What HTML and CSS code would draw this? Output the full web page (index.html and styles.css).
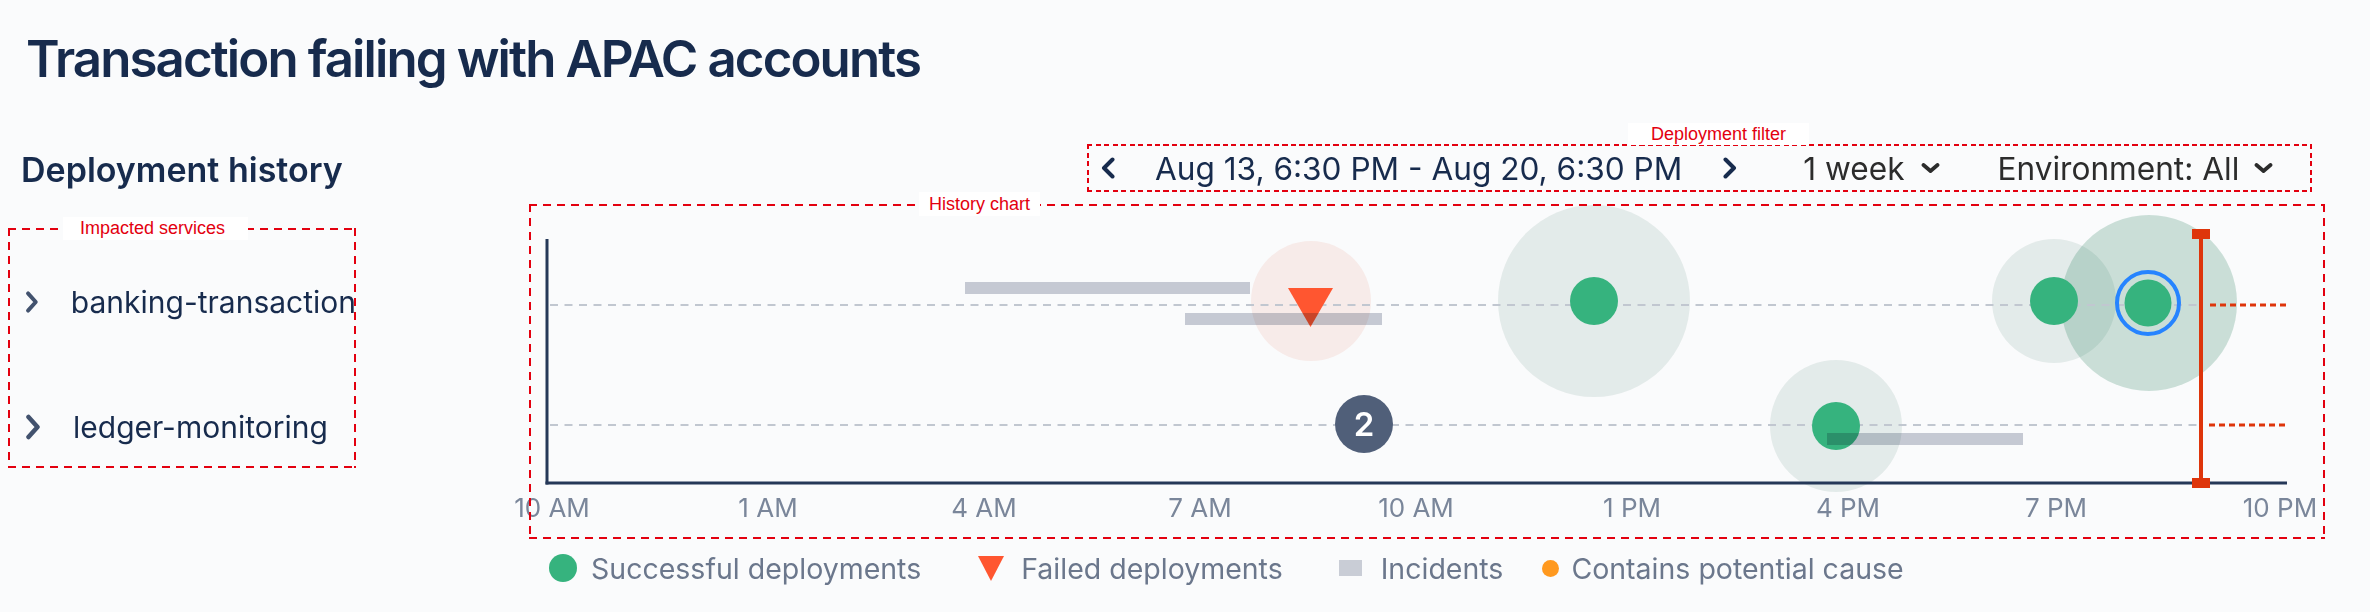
FILE: index.html
```html
<!DOCTYPE html>
<html lang="en">
<head>
<meta charset="utf-8">
<title>Deployment history</title>
<link rel="stylesheet" href="styles.css">
</head>
<body>
<h1 class="title">Transaction failing with APAC accounts</h1>
<main class="layout">
  <h2 class="section-title">Deployment history</h2>

  <div class="filter annot annot--fine">
    <span class="annot-label annot-label--filter">Deployment filter</span>
    <button class="ctl nav-btn nav-btn--prev" aria-label="Previous">
      <svg width="16" height="22" viewBox="0 0 16 22"><polyline points="12.5,2.5 4,11 12.5,19.5"/></svg>
    </button>
    <span class="range">Aug 13, 6:30 PM - Aug 20, 6:30 PM</span>
    <button class="ctl nav-btn nav-btn--next" aria-label="Next">
      <svg width="16" height="22" viewBox="0 0 16 22"><polyline points="3.5,2.5 12,11 3.5,19.5"/></svg>
    </button>
    <button class="ctl select select--period">1 week
      <svg width="19" height="10" viewBox="0 0 19 10"><polyline points="2.5,2 9.5,8 16.5,2"/></svg>
    </button>
    <button class="ctl select select--env">Environment: All
      <svg width="19" height="10" viewBox="0 0 19 10"><polyline points="2.5,2 9.5,8 16.5,2"/></svg>
    </button>
  </div>

  <div class="services annot">
    <span class="annot-label annot-label--services">Impacted services</span>
    <div class="service-row">
      <svg class="service-chevron" width="16" height="26" viewBox="0 0 16 26"><polyline points="3.5,3 12.5,13 3.5,23"/></svg>
      <span class="service-name">banking-transaction</span>
    </div>
    <div class="service-row">
      <svg class="service-chevron" width="16" height="26" viewBox="0 0 16 26"><polyline points="3.5,3 12.5,13 3.5,23"/></svg>
      <span class="service-name">ledger-monitoring</span>
    </div>
  </div>

  <div class="chart annot">
    <span class="annot-label annot-label--chart">History chart</span>
    <svg class="chart-svg" width="1796" height="335" viewBox="529 204 1796 335">
      <g>
        <circle class="halo halo--fail" cx="1311" cy="301" r="60"/>
        <circle class="halo" cx="1594" cy="301" r="96"/>
        <circle class="halo" cx="1836" cy="426" r="66"/>
        <circle class="halo" cx="2054" cy="301" r="62"/>
        <circle class="halo halo--strong" cx="2149" cy="303" r="88"/>
      </g>
      <g>
        <line class="gridline" x1="550" y1="305" x2="2197" y2="305"/>
        <line class="gridline" x1="550" y1="425" x2="2197" y2="425"/>
        <line class="gridline gridline--future" x1="2210" y1="305" x2="2287" y2="305"/>
        <line class="gridline gridline--future" x1="2209" y1="425" x2="2286" y2="425"/>
      </g>
      <g>
        <line class="axis" x1="547" y1="239" x2="547" y2="484.5"/>
        <line class="axis" x1="545.5" y1="483" x2="2287" y2="483"/>
      </g>
      <g class="ticks">
        <text x="552" y="517">10 AM</text>
        <text x="768" y="517">1 AM</text>
        <text x="984" y="517">4 AM</text>
        <text x="1200" y="517">7 AM</text>
        <text x="1416" y="517">10 AM</text>
        <text x="1632" y="517">1 PM</text>
        <text x="1848" y="517">4 PM</text>
        <text x="2056" y="517">7 PM</text>
        <text x="2280" y="517">10 PM</text>
      </g>
      <g>
        <circle class="dot" cx="1594" cy="301" r="24"/>
        <circle class="dot" cx="1836" cy="426" r="24"/>
        <circle class="dot" cx="2054" cy="301" r="24"/>
        <circle class="ring" cx="2148" cy="303" r="31"/>
        <circle class="dot" cx="2148" cy="303" r="23.5"/>
        <polygon class="failed" points="1288,288 1333,288 1310.5,327"/>
        <circle class="cluster" cx="1364" cy="424" r="29"/>
        <text class="cluster-count" x="1364" y="436">2</text>
      </g>
      <g>
        <rect class="incident" x="965" y="282" width="285" height="12"/>
        <rect class="incident" x="1185" y="313" width="197" height="12"/>
        <rect class="incident" x="1827" y="433" width="196" height="12"/>
      </g>
      <g>
        <line class="now-line" x1="2201" y1="234" x2="2201" y2="483"/>
        <rect class="now-cap" x="2192" y="229" width="18" height="10"/>
        <rect class="now-cap" x="2192" y="478" width="18" height="10"/>
      </g>
    </svg>
  </div>

  <div class="legend">
    <div class="legend-item">
      <span class="legend-icon legend-icon--success"></span>
      <span class="legend-text">Successful deployments</span>
    </div>
    <div class="legend-item legend-item--failed">
      <svg class="legend-icon legend-icon--failed" width="26" height="25" viewBox="0 0 26 25"><polygon points="0,0 26,0 13,25"/></svg>
      <span class="legend-text">Failed deployments</span>
    </div>
    <div class="legend-item legend-item--incidents">
      <span class="legend-icon legend-icon--incident"></span>
      <span class="legend-text">Incidents</span>
    </div>
    <div class="legend-item legend-item--cause">
      <span class="legend-icon legend-icon--cause"></span>
      <span class="legend-text">Contains potential cause</span>
    </div>
  </div>
</main>
</body>
</html>
```

FILE: styles.css
```css
* { box-sizing: border-box; }

html, body {
  margin: 0;
  background: #fafbfc;
}

body {
  width: 2370px;
  height: 612px;
  overflow: hidden;
  font-family: Inter, "Noto Sans", sans-serif;
  color: #172b4d;
  --annot-red: #e3000f;
}

.title {
  margin: 0;
  padding: 27px 0 0 26px;
  font-size: 51px;
  line-height: 63px;
  font-weight: 600;
  letter-spacing: -1.9px;
}

.layout {
  display: grid;
  grid-template-columns: 529px 1796px;
  grid-template-rows: 48px auto auto;
  margin-top: 54px;
}

.section-title {
  grid-row: 1;
  grid-column: 1;
  margin: 5px 0 0 21px;
  font-size: 34px;
  line-height: 41px;
  font-weight: 600;
  white-space: nowrap;
}

/* annotation overlays (dashed red boxes) */
.annot {
  position: relative;
  --dash: 8px;
  --gap: 6px;
  --bw: 2px;
}
.annot--fine {
  --dash: 5px;
  --gap: 3.5px;
}
.annot::after {
  content: "";
  position: absolute;
  inset: 0;
  pointer-events: none;
  background:
    repeating-linear-gradient(90deg, var(--annot-red) 0 var(--dash), transparent var(--dash) calc(var(--dash) + var(--gap))) left top / 100% var(--bw) no-repeat,
    repeating-linear-gradient(90deg, var(--annot-red) 0 var(--dash), transparent var(--dash) calc(var(--dash) + var(--gap))) left bottom / 100% var(--bw) no-repeat,
    repeating-linear-gradient(180deg, var(--annot-red) 0 var(--dash), transparent var(--dash) calc(var(--dash) + var(--gap))) left top / var(--bw) 100% no-repeat,
    repeating-linear-gradient(180deg, var(--annot-red) 0 var(--dash), transparent var(--dash) calc(var(--dash) + var(--gap))) right top / var(--bw) 100% no-repeat;
}
.annot-label {
  position: absolute;
  z-index: 2;
  background: #ffffff;
  color: var(--annot-red);
  font-family: "Liberation Sans", Arial, sans-serif;
  font-size: 18px;
  line-height: 23px;
  white-space: nowrap;
}
.annot-label--services { left: 55px; top: -11px; padding: 0 23px 0 17px; }
.annot-label--filter { left: 541px; top: -21px; height: 22px; line-height: 22px; padding: 0 23px; }
.annot-label--chart { left: 390px; top: -12px; height: 24px; line-height: 24px; padding: 0 10px; }

/* filter bar */
.filter {
  grid-row: 1;
  grid-column: 2;
  justify-self: end;
  margin-right: 13px;
  width: 1225px;
  height: 48px;
  display: flex;
  align-items: center;
  padding-left: 13px;
  font-size: 31.6px;
}
.ctl {
  font: inherit;
  background: none;
  border: 0;
  padding: 0;
  margin: 0;
  display: flex;
  align-items: center;
}
.nav-btn svg polyline {
  fill: none;
  stroke: #172b4d;
  stroke-width: 4;
  stroke-linecap: round;
  stroke-linejoin: round;
}
.ctl.nav-btn--prev { margin-right: 39px; }
.ctl.nav-btn--next { margin-left: 40px; }
.range {
  color: #172b4d;
  white-space: nowrap;
}
.ctl.select {
  color: #2c2c2c;
  gap: 16px;
  white-space: nowrap;
}
.select svg polyline {
  fill: none;
  stroke: #2c2c2c;
  stroke-width: 3.8;
  stroke-linecap: round;
  stroke-linejoin: round;
}
.ctl.select--period { margin-left: 65px; }
.ctl.select--env { margin-left: 58px; gap: 15px; }

/* services */
.services {
  grid-row: 2;
  grid-column: 1;
  align-self: start;
  margin: 36px 0 0 8px;
  width: 348px;
  height: 240px;
  display: flex;
  flex-direction: column;
  gap: 75px;
  padding: 49px 0 0 17px;
}
.service-row {
  display: flex;
  align-items: center;
  gap: 32px;
  height: 50px;
}
.service-chevron polyline {
  fill: none;
  stroke: #42526e;
  stroke-width: 4.5;
  stroke-linecap: round;
  stroke-linejoin: round;
}
.service-name {
  font-size: 30px;
  color: #172b4d;
  white-space: nowrap;
}

/* chart */
.chart {
  grid-row: 2;
  grid-column: 2;
  margin-top: 12px;
  height: 335px;
}
.chart-svg {
  display: block;
  overflow: visible;
}
.halo { fill: rgba(0, 82, 56, 0.09); }
.halo--strong { fill: rgba(10, 110, 70, 0.2); }
.halo--fail { fill: rgba(222, 53, 11, 0.08); }
.gridline {
  stroke: #c1c7d0;
  stroke-width: 2;
  stroke-dasharray: 8 6.5;
}
.gridline--future {
  stroke: #de350b;
  stroke-width: 3;
  stroke-dasharray: 6 4;
}
.axis {
  stroke: #253858;
  stroke-width: 3;
}
.ticks text {
  font-family: Inter, "Noto Sans", sans-serif;
  font-size: 26px;
  fill: #7a869a;
  text-anchor: middle;
}
.dot { fill: #36b37e; }
.ring {
  fill: none;
  stroke: #2684ff;
  stroke-width: 4;
}
.failed { fill: #ff5630; }
.cluster { fill: #505f79; }
.cluster-count {
  font-family: Inter, "Noto Sans", sans-serif;
  font-size: 33px;
  font-weight: 600;
  fill: #ffffff;
  text-anchor: middle;
}
.incident {
  fill: #c9cdd6;
  mix-blend-mode: multiply;
}
.now-line {
  stroke: #de350b;
  stroke-width: 4;
}
.now-cap { fill: #de350b; }

/* legend */
.legend {
  grid-row: 3;
  grid-column: 2;
  display: flex;
  align-items: center;
  height: 30px;
  margin: 14px 0 0 20px;
  font-size: 28.5px;
  color: #6b778c;
  white-space: nowrap;
}
.legend-item {
  display: flex;
  align-items: center;
}
.legend-item--failed { margin-left: 57px; }
.legend-item--incidents { margin-left: 56px; }
.legend-item--cause { margin-left: 39px; }
.legend-icon { flex: none; display: block; }
.legend-icon--success {
  width: 28px;
  height: 28px;
  border-radius: 50%;
  background: #36b37e;
  margin-right: 14px;
}
.legend-icon--failed { margin-right: 17px; }
.legend-icon--failed polygon { fill: #ff5630; }
.legend-icon--incident {
  width: 23px;
  height: 16px;
  background: #c9cdd6;
  margin-right: 19px;
}
.legend-icon--cause {
  width: 17px;
  height: 17px;
  border-radius: 50%;
  background: #ff991f;
  margin-right: 12px;
}
```
